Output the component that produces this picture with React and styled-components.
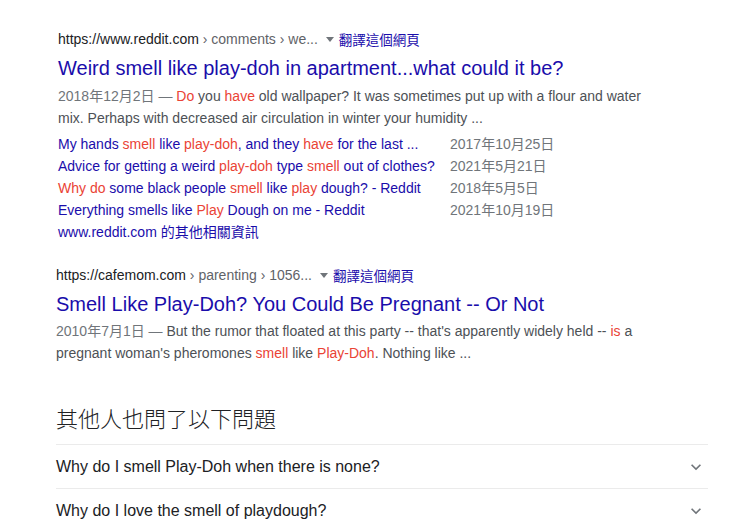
import React from "react";
import styled, { createGlobalStyle } from "styled-components";

const GlobalStyle = createGlobalStyle`
  body {
    margin: 0;
    background: #fff;
    font-family: "Liberation Sans", Arial, "Noto Sans CJK TC", sans-serif;
  }
`;

const Page = styled.div`
  padding: 29px 0 0 56px;
  width: 652px;
`;

const Result = styled.div`
  padding-left: ${(p) => p.$indent || 0}px;
  margin-bottom: ${(p) => p.$gap || 0}px;
`;

const UrlLine = styled.div`
  display: flex;
  align-items: center;
  height: 20px;
  font-size: 14px;
  color: #202124;
  white-space: nowrap;
`;

const Crumbs = styled.span`
  color: #5f6368;
`;

const Caret = styled.span`
  margin: 0 5px 0 8px;
  width: 0;
  height: 0;
  border-left: 4px solid transparent;
  border-right: 4px solid transparent;
  border-top: 5px solid #70757a;
`;

const Translate = styled.a`
  color: #1a0dab;
  font-size: 13.5px;
  text-decoration: none;
`;

const Title = styled.a`
  display: block;
  margin-top: 6px;
  font-size: 20px;
  line-height: 26px;
  color: #1a0dab;
  text-decoration: none;
`;

const Snippet = styled.div`
  margin-top: ${(p) => p.$top || 4}px;
  max-width: 600px;
  font-size: 14px;
  line-height: 22px;
  color: #4d5156;
`;

const Date = styled.span`
  color: #70757a;
`;

const Em = styled.span`
  color: #ea4335;
`;

const Sitelinks = styled.div`
  margin-top: 4px;
  display: grid;
  grid-template-columns: 392px auto;
  font-size: 14px;
  line-height: 22px;
`;

const SiteLink = styled.a`
  color: #1a0dab;
  text-decoration: none;
  white-space: nowrap;
`;

const SiteDate = styled.span`
  color: #70757a;
`;

const More = styled(SiteLink)`
  grid-column: 1 / span 2;
`;

const Heading = styled.div`
  margin-top: 42px;
  font-size: 22px;
  line-height: 28px;
  color: #202124;
  padding-bottom: 10px;
  font-family: "Liberation Sans", "Noto Sans CJK TC", sans-serif;
  font-weight: 300;
`;

const Question = styled.div`
  display: flex;
  align-items: center;
  justify-content: space-between;
  height: 43px;
  border-top: 1px solid #ebebeb;
  font-size: 16px;
  color: #202124;
`;

const Chevron = () => (
  <svg width="20" height="20" viewBox="0 0 24 24" style={{ marginRight: 2 }}>
    <path d="M7.41 8.59 12 13.17l4.59-4.58L18 10l-6 6-6-6z" fill="#70757a" />
  </svg>
);

const sitelinks = [
  [
    <>My hands <Em>smell</Em> like <Em>play-doh</Em>, and they <Em>have</Em> for the last ...</>,
    "2017年10月25日",
  ],
  [
    <>Advice for getting a weird <Em>play-doh</Em> type <Em>smell</Em> out of clothes?</>,
    "2021年5月21日",
  ],
  [
    <><Em>Why do</Em> some black people <Em>smell</Em> like <Em>play</Em> dough? - Reddit</>,
    "2018年5月5日",
  ],
  [
    <>Everything smells like <Em>Play</Em> Dough on me - Reddit</>,
    "2021年10月19日",
  ],
];

export default function App() {
  return (
    <Page>
      <GlobalStyle />
      <Result $indent={2} $gap={22}>
        <UrlLine>
          https://www.reddit.com<Crumbs>&nbsp;› comments › we...</Crumbs>
          <Caret />
          <Translate>翻譯這個網頁</Translate>
        </UrlLine>
        <Title>Weird smell like play-doh in apartment...what could it be?</Title>
        <Snippet>
          <Date>2018年12月2日 — </Date>
          <Em>Do</Em> you <Em>have</Em> old wallpaper? It was sometimes put up with a flour and water
          mix. Perhaps with decreased air circulation in winter your humidity ...
        </Snippet>
        <Sitelinks>
          {sitelinks.map(([text, date], i) => (
            <React.Fragment key={i}>
              <SiteLink>{text}</SiteLink>
              <SiteDate>{date}</SiteDate>
            </React.Fragment>
          ))}
          <More>www.reddit.com 的其他相關資訊</More>
        </Sitelinks>
      </Result>

      <Result>
        <UrlLine>
          https://cafemom.com<Crumbs>&nbsp;› parenting › 1056...</Crumbs>
          <Caret />
          <Translate>翻譯這個網頁</Translate>
        </UrlLine>
        <Title>Smell Like Play-Doh? You Could Be Pregnant -- Or Not</Title>
        <Snippet $top={3}>
          <Date>2010年7月1日 — </Date>
          But the rumor that floated at this party -- that's apparently widely held -- <Em>is</Em> a
          pregnant woman's pheromones <Em>smell</Em> like <Em>Play-Doh</Em>. Nothing like ...
        </Snippet>
      </Result>

      <Heading>其他人也問了以下問題</Heading>
      <Question>
        Why do I smell Play-Doh when there is none?
        <Chevron />
      </Question>
      <Question>
        Why do I love the smell of playdough?
        <Chevron />
      </Question>
    </Page>
  );
}
